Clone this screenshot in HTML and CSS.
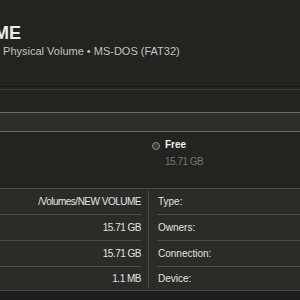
FILE: index.html
```html
<!DOCTYPE html>
<html lang="en">
<head>
    <meta charset="UTF-8">
    <meta name="viewport" content="width=device-width, initial-scale=1.0">
    <link rel="stylesheet" href="styles.css">
</head>
<body>
    <div class="window">
        <header class="volume-header">
            <h1 class="volume-title">NEW VOLUME</h1>
            <p class="volume-sub">USB External Physical Volume &bull; MS-DOS (FAT32)</p>
        </header>
        <div class="rule"></div>

        <section class="usage">
            <div class="usage-bar"></div>
            <div class="legend">
                <div class="legend-item">
                    <span class="legend-dot"></span>
                    <div class="legend-text">
                        <div class="legend-name">Free</div>
                        <div class="legend-size">15.71 GB</div>
                    </div>
                </div>
            </div>
        </section>

        <section class="info">
            <div class="info-col left">
                <div class="info-row">/Volumes/NEW VOLUME</div>
                <div class="info-row">15.71 GB</div>
                <div class="info-row">15.71 GB</div>
                <div class="info-row">1.1 MB</div>
            </div>
            <div class="info-divider"></div>
            <div class="info-col right">
                <div class="info-row">Type:</div>
                <div class="info-row">Owners:</div>
                <div class="info-row">Connection:</div>
                <div class="info-row">Device:</div>
            </div>
        </section>
        <div class="footer"></div>
    </div>
</body>
</html>
```

FILE: styles.css
```css
/* Base styles */
:root {
    --window-bg: #232320;
    --panel-bg: #2b2b28;
    --footer-bg: #1e1e1c;
    --line: #4c4c48;
    --bar-line: #6b6b67;
    --primary-text: #e4e4e2;
    --secondary-text: #c4c4c0;
    --muted-text: #767673;
}

body {
    font-family: 'Liberation Sans', Arial, sans-serif;
    margin: 0;
    background-color: var(--window-bg);
    color: var(--primary-text);
    overflow: hidden;
}

.window {
    width: 300px;
    height: 300px;
    overflow: hidden;
}

/* Header */
.volume-header {
    box-sizing: border-box;
    height: 87px;
    padding-top: 22px;
    border-bottom: 1px solid #1a1a18;
    white-space: nowrap;
}

.volume-title {
    margin: 0 0 0 -103px;
    font-size: 18px;
    line-height: 22px;
    font-weight: bold;
    color: #ebebe9;
}

.volume-sub {
    margin: 0 0 0 -66px;
    font-size: 11px;
    line-height: 15px;
    color: var(--secondary-text);
}

.rule {
    margin-top: 2px;
    border-top: 1px solid #3b3b38;
}

/* Usage bar */
.usage {
    padding-top: 22px;
}

.usage-bar {
    height: 18px;
    border-top: 1px solid var(--bar-line);
    border-bottom: 1px solid var(--bar-line);
    background-color: #2d2d2a;
}

.legend {
    margin-top: 6px;
    padding-left: 152px;
    display: flex;
}

.legend-item {
    display: flex;
    gap: 5px;
}

.legend-dot {
    box-sizing: border-box;
    width: 8px;
    height: 8px;
    margin-top: 4px;
    border-radius: 50%;
    border: 1px solid #8a8a86;
    background-color: #3c3c39;
}

.legend-name {
    font-size: 10px;
    line-height: 14px;
    font-weight: bold;
    color: #f0f0ee;
}

.legend-size {
    margin-top: 3px;
    font-size: 10px;
    line-height: 14px;
    letter-spacing: -0.5px;
    color: var(--muted-text);
}

/* Info table */
.info {
    margin-top: 19px;
    display: flex;
    border-top: 1px solid var(--line);
    border-bottom: 1px solid var(--line);
    background-color: var(--panel-bg);
}

.info-col.left {
    width: 141px;
    text-align: right;
    letter-spacing: -0.5px;
}

.info-col.right {
    flex: 1;
    padding-left: 1px;
}

.info-row {
    height: 25px;
    line-height: 25px;
    font-size: 10px;
    white-space: nowrap;
    border-bottom: 1px solid var(--line);
}

.info-col.right .info-row {
    margin-left: -1px;
    padding-left: 1px;
}

.info-row:last-child {
    height: 23px;
    line-height: 23px;
    border-bottom: none;
}

.info-divider {
    width: 1px;
    margin: 2px 8px 2px 7px;
    background-color: var(--line);
}

.footer {
    height: 20px;
    background-color: var(--footer-bg);
}
```
